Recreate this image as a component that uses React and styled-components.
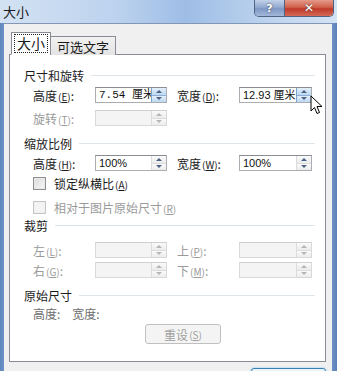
import React from 'react';
import styled, { createGlobalStyle } from 'styled-components';

const GlobalStyle = createGlobalStyle`
  html, body {
    margin: 0;
    padding: 0;
    overflow: hidden;
  }
  body {
    font-family: "Noto Sans CJK SC", "Noto Sans", sans-serif;
  }
`;

const Window = styled.div`
  position: relative;
  width: 337px;
  height: 371px;
  overflow: hidden;
  display: flex;
  flex-direction: column;
  background: linear-gradient(90deg, #5f86bd 0, #6d92c6 4px, #c6d9ef 4px, #b3cbea 45%, #a4c0e6 60%, #c3d7ef 85%, #6d92c6 332px, #5a80b8 337px);
`;

const TitleBar = styled.div`
  height: 23px;
  flex-shrink: 0;
  display: flex;
  align-items: flex-start;
  background: linear-gradient(90deg, #d3e2f3 0%, #bcd2ee 35%, #9ebde6 55%, #b7cfec 75%, #d4e3f4 100%);
`;

const Title = styled.span`
  margin: 3px 0 0 3px;
  font-size: 13px;
  line-height: 17px;
  color: #1b1b1b;
`;

const Captions = styled.div`
  margin-left: auto;
  margin-right: 3px;
  display: flex;
  border: 1px solid #4f6383;
  border-top: none;
  border-radius: 0 0 5px 5px;
  overflow: hidden;
`;

const CaptionButton = styled.div`
  width: ${p => p.$w}px;
  height: 16px;
  display: flex;
  align-items: center;
  justify-content: center;
  color: #fff;
  font-family: "DejaVu Sans", sans-serif;
  font-weight: bold;
  font-size: ${p => p.$fs}px;
  text-shadow: 0 0 2px #333;
  background: ${p => p.$close
    ? 'linear-gradient(180deg, #e59a8a 0%, #d0604c 45%, #c0392b 55%, #d46a55 100%)'
    : 'linear-gradient(180deg, #c2d1e8 0%, #93aad0 45%, #7f98c4 55%, #a2b7da 100%)'};
  border-left: ${p => p.$close ? '1px solid #4f6383' : 'none'};
`;

const Body = styled.div`
  flex: 1;
  margin: 0 5px 0 4px;
  background: #f0f0f0;
  border-top: 1px solid #8297b5;
  padding: 8px 6px 0 5px;
  display: flex;
  flex-direction: column;
`;

const Tabs = styled.div`
  display: flex;
  align-items: flex-end;
  padding-left: 2px;
  height: 23px;
  position: relative;
  z-index: 1;
`;

const Tab = styled.div`
  height: ${p => p.$active ? 23 : 19}px;
  padding: 0 ${p => p.$active ? 3 : 6}px;
  box-sizing: border-box;
  border: 1px solid #898c95;
  border-bottom: ${p => p.$active ? '1px solid #fff' : 'none'};
  background: ${p => p.$active ? '#fff' : 'linear-gradient(180deg, #f2f2f2, #e3e3e3)'};
  display: flex;
  align-items: center;
  font-size: ${p => p.$active ? 14 : 13}px;
  color: #1b1b1b;
  margin-left: ${p => p.$active ? 0 : -1}px;
`;

const FocusText = styled.span`
  outline: 1px dotted #222;
  padding: 0 2px;
  line-height: 17px;
`;

const Panel = styled.div`
  height: 308px;
  box-sizing: border-box;
  margin-top: -1px;
  border: 1px solid #898c95;
  background: #fff;
  padding: 12px 10px 0 14px;
  display: flex;
  flex-direction: column;
`;

const Heading = styled.div`
  display: flex;
  align-items: center;
  height: 16px;
  margin-top: ${p => p.$mt || 0}px;
  font-size: 12px;
  color: #1b1b1b;
  gap: 7px;
  &::after {
    content: "";
    flex: 1;
    height: 1px;
    background: #dde4ea;
  }
`;

const Row = styled.div`
  display: flex;
  align-items: center;
  height: 20px;
  margin-top: ${p => p.$mt || 0}px;
  padding-left: 9px;
`;

const Label = styled.span`
  width: ${p => p.$w || 62}px;
  flex-shrink: 0;
  font-size: 12px;
  color: ${p => p.$disabled ? '#9a9a9a' : '#1b1b1b'};
  white-space: nowrap;
`;

const Key = styled.span`
  font-size: 10px;
  margin-left: 1px;
  u { text-decoration: underline; }
`;

const Input = styled.div`
  width: ${p => p.$w || 72}px;
  height: 16px;
  box-sizing: border-box;
  display: flex;
  border: 1px solid ${p => p.$disabled ? '#d9d9d9' : '#abadb3'};
  border-top-color: ${p => p.$disabled ? '#cfcfcf' : '#8a8c93'};
  background: ${p => p.$disabled ? '#f4f4f4' : '#fff'};
  margin-right: ${p => p.$mr || 0}px;
  flex-shrink: 0;
`;

const InputText = styled.span`
  flex: 1;
  overflow: hidden;
  white-space: nowrap;
  font-family: ${p => p.$mono ? '"Liberation Mono", "Noto Sans CJK SC", monospace' : '"Liberation Sans", "Noto Sans CJK SC", sans-serif'};
  font-size: 11px;
  line-height: 14px;
  padding-left: 3px;
  color: #111;
`;

const Spinner = styled.div`
  width: 14px;
  display: flex;
  flex-direction: column;
  border-left: 1px solid ${p => p.$hot ? '#7da2ce' : '#dcdcdc'};
`;

const SpinHalf = styled.div`
  flex: 1;
  display: flex;
  align-items: center;
  justify-content: center;
  background: ${p => p.$hot ? 'linear-gradient(180deg, #e4f0fb, #bcd8f1)' : 'linear-gradient(180deg, #fafafa, #ececec)'};
  border-bottom: ${p => p.$top ? '1px solid ' + (p.$hot ? '#8eb0d8' : '#dcdcdc') : 'none'};
  &::before {
    content: "";
    border-left: 3px solid transparent;
    border-right: 3px solid transparent;
    ${p => p.$top ? 'border-bottom' : 'border-top'}: 3px solid ${p => p.$disabled ? '#b5b5b5' : '#4d6185'};
  }
`;

const CheckRow = styled.label`
  display: flex;
  align-items: center;
  gap: 8px;
  height: 20px;
  margin-top: ${p => p.$mt || 0}px;
  padding-left: 9px;
  font-size: 12px;
  color: ${p => p.$disabled ? '#9a9a9a' : '#1b1b1b'};
`;

const Box = styled.span`
  width: 13px;
  height: 13px;
  box-sizing: border-box;
  border: 1px solid ${p => p.$disabled ? '#c5c5c5' : '#8f8f8f'};
  background: ${p => p.$disabled ? '#f4f4f4' : 'linear-gradient(135deg, #dcdcdc, #f8f8f8)'};
  box-shadow: inset 0 0 0 1px ${p => p.$disabled ? '#f0f0f0' : '#e9e9e9'};
`;

const InfoRow = styled.div`
  display: flex;
  gap: 12px;
  height: 18px;
  align-items: center;
  margin-top: 1px;
  padding-left: 9px;
  font-size: 12px;
  color: #6d6d6d;
`;

const ResetButton = styled.div`
  align-self: flex-start;
  margin: 2px 0 0 121px;
  width: 76px;
  height: 20px;
  box-sizing: border-box;
  border: 1px solid #c0c0c0;
  border-radius: 3px;
  background: #f4f4f4;
  display: flex;
  align-items: center;
  justify-content: center;
  font-size: 12px;
  color: #9f9f9f;
`;

const Footer = styled.div`
  display: flex;
  justify-content: flex-end;
  padding-top: 6px;
`;

const OkButton = styled.div`
  width: 75px;
  height: 22px;
  box-sizing: border-box;
  border: 1px solid #3c7fb1;
  border-radius: 3px;
  background: linear-gradient(180deg, #eaf6fd, #bee6fd);
  box-shadow: 0 0 2px #6fc0ef;
`;

const Cursor = styled.svg`
  position: absolute;
  left: 310px;
  top: 95px;
`;

const Spin = ({ hot, disabled }) => (
  <Spinner $hot={hot}>
    <SpinHalf $top $hot={hot} $disabled={disabled} />
    <SpinHalf $hot={hot} $disabled={disabled} />
  </Spinner>
);

const Field = ({ label, k, value, disabled, hot, mono, w, mr }) => (
  <>
    <Label $disabled={disabled}>{label}<Key>(<u>{k}</u>)</Key>:</Label>
    <Input $disabled={disabled} $w={w} $mr={mr}>
      <InputText $mono={mono}>{value}</InputText>
      <Spin hot={hot} disabled={disabled} />
    </Input>
  </>
);

export default function App() {
  return (
    <>
      <GlobalStyle />
      <Window>
        <TitleBar>
          <Title>大小</Title>
          <Captions>
            <CaptionButton $w={29} $fs={11}>?</CaptionButton>
            <CaptionButton $w={48} $fs={12} $close>✕</CaptionButton>
          </Captions>
        </TitleBar>
        <Body>
          <Tabs>
            <Tab $active><FocusText>大小</FocusText></Tab>
            <Tab>可选文字</Tab>
          </Tabs>
          <Panel>
            <Heading>尺寸和旋转</Heading>
            <Row $mt={2}>
              <Field label="高度" k="E" value="7.54 厘米" mono hot mr={10} />
              <Field label="宽度" k="D" value="12.93 厘米" hot w={73} />
            </Row>
            <Row $mt={3}>
              <Field label="旋转" k="T" value="" disabled />
            </Row>

            <Heading $mt={7}>缩放比例</Heading>
            <Row $mt={2}>
              <Field label="高度" k="H" value="100%" mr={10} />
              <Field label="宽度" k="W" value="100%" w={73} />
            </Row>
            <CheckRow>
              <Box />
              <span>锁定纵横比<Key>(<u>A</u>)</Key></span>
            </CheckRow>
            <CheckRow $mt={4} $disabled>
              <Box $disabled />
              <span>相对于图片原始尺寸<Key>(<u>R</u>)</Key></span>
            </CheckRow>

            <Heading>裁剪</Heading>
            <Row $mt={7}>
              <Field label="左" k="L" value="" disabled mr={10} />
              <Field label="上" k="P" value="" disabled w={73} />
            </Row>
            <Row>
              <Field label="右" k="G" value="" disabled mr={10} />
              <Field label="下" k="M" value="" disabled w={73} />
            </Row>

            <Heading $mt={7}>原始尺寸</Heading>
            <InfoRow>
              <span>高度:</span>
              <span>宽度:</span>
            </InfoRow>
            <ResetButton>重设<Key>(<u>S</u>)</Key></ResetButton>
          </Panel>
          <Footer>
            <OkButton />
          </Footer>
        </Body>
        <Cursor width="14" height="21" viewBox="0 0 14 21">
          <path d="M1 1 L1 16 L4.5 12.5 L7 18.5 L9.5 17.5 L7 11.5 L12 11.5 Z" fill="#fff" stroke="#000" strokeWidth="1" strokeLinejoin="round" />
        </Cursor>
      </Window>
    </>
  );
}
